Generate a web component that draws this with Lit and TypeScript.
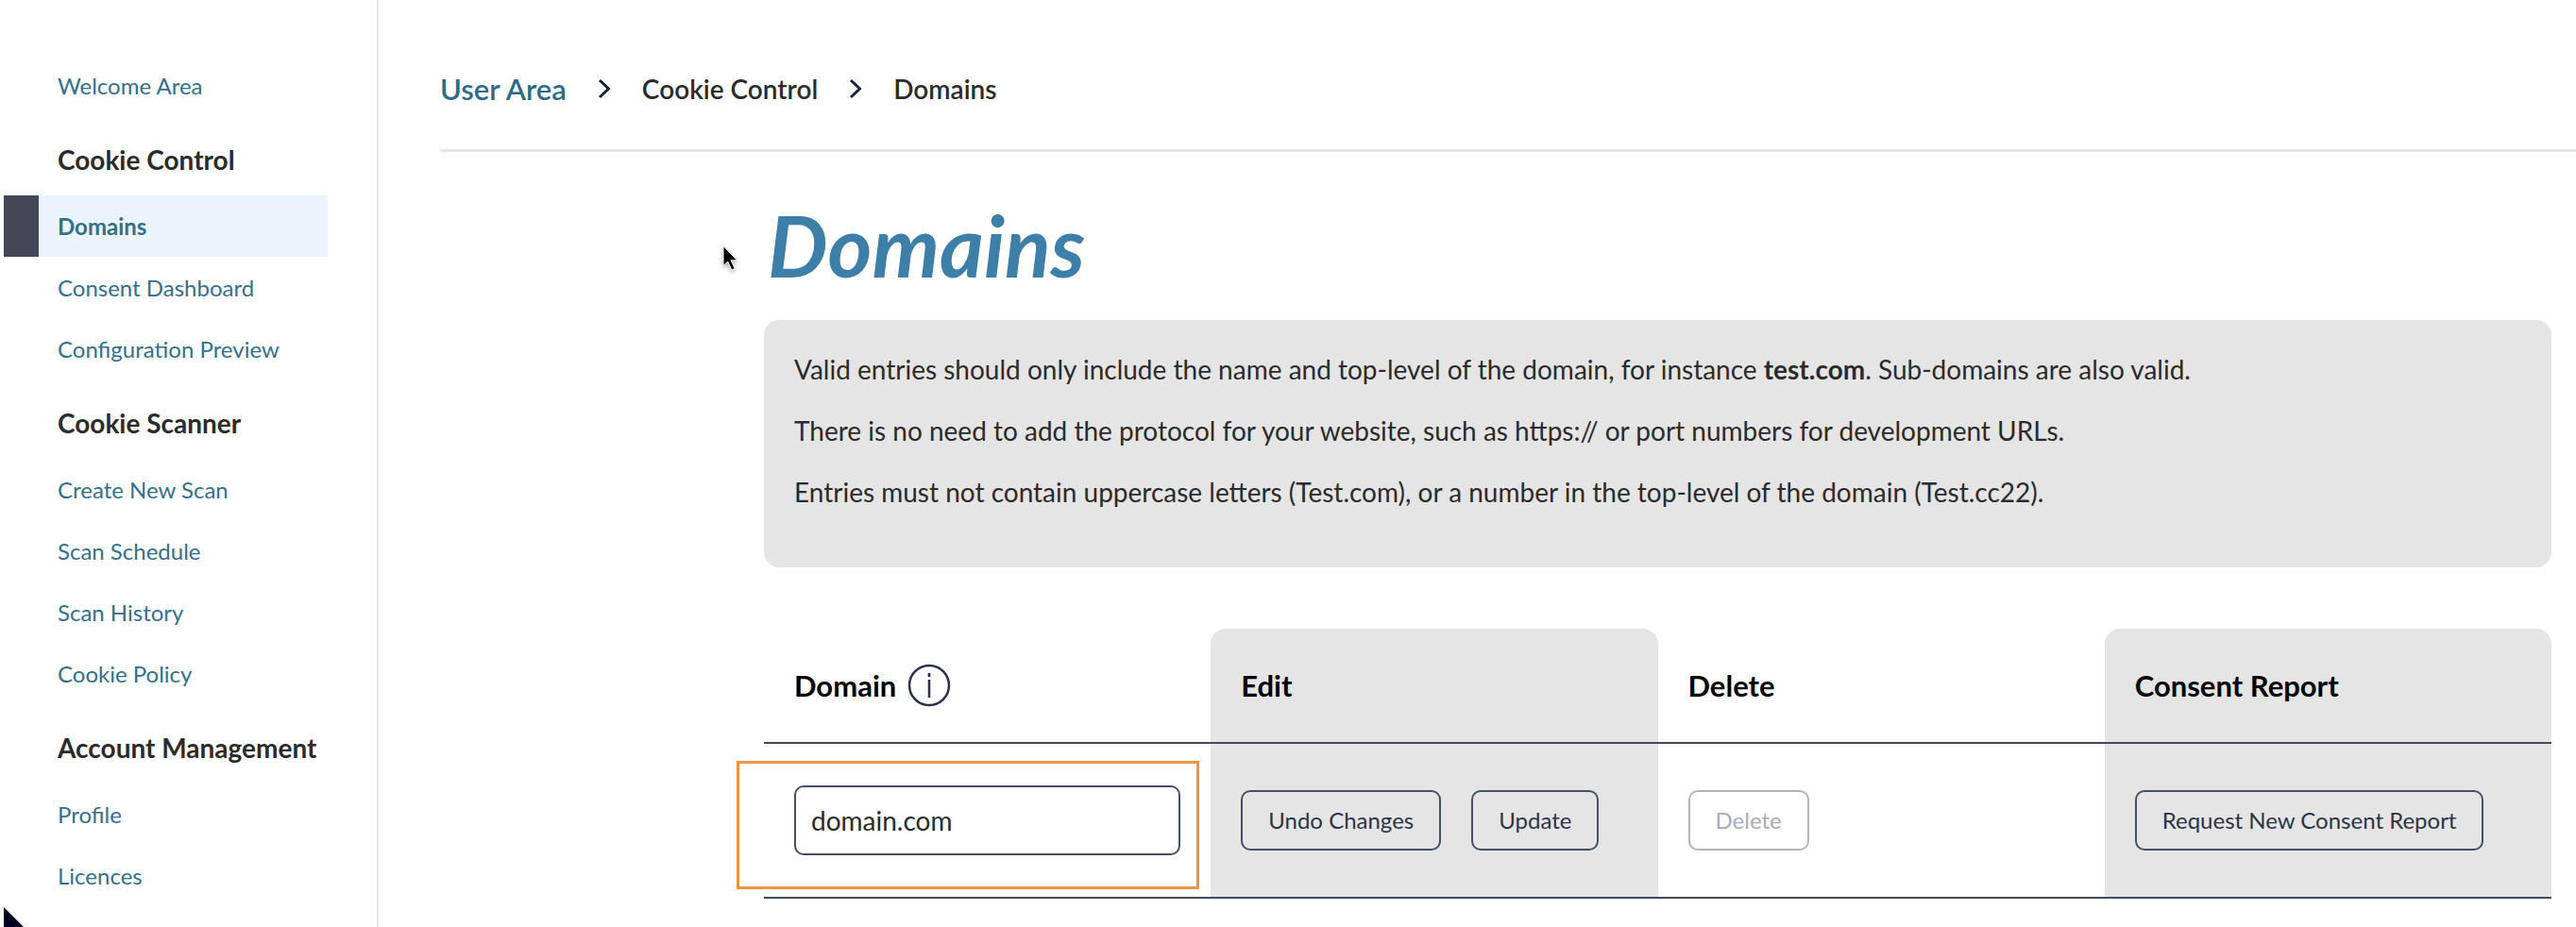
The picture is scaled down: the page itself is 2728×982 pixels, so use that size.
import { LitElement, html, css } from "lit";
import { customElement, state } from "lit/decorators.js";
import { classMap } from "lit/directives/class-map.js";

interface NavGroup {
  title?: string;
  items: string[];
}

const NAV: NavGroup[] = [
  { items: ["Welcome Area"] },
  { title: "Cookie Control", items: ["Domains", "Consent Dashboard", "Configuration Preview"] },
  { title: "Cookie Scanner", items: ["Create New Scan", "Scan Schedule", "Scan History", "Cookie Policy"] },
  { title: "Account Management", items: ["Profile", "Licences"] },
];

@customElement("side-nav")
export class SideNav extends LitElement {
  static styles = css`
    :host {
      display: block;
      box-sizing: border-box;
      border-right: 2px solid #e9e9e9;
      padding: 58px 52px 0 4px;
    }
    ul {
      list-style: none;
      margin: 0;
      padding: 0;
    }
    h2 {
      margin: 0;
      padding: 30px 0 22px 57px;
      font-size: 28px;
      font-weight: 700;
      line-height: 32px;
      color: #2b2b2b;
      white-space: nowrap;
    }
    .link {
      display: block;
      padding-left: 57px;
      font-size: 24px;
      line-height: 65px;
      color: #34708b;
      text-decoration: none;
    }
    .active {
      border-left: 37px solid #434757;
      padding-left: 20px;
      background: #ebf3fc;
      font-weight: 700;
    }
  `;

  render() {
    return html`<nav aria-label="Main">
      ${NAV.map(
        (group) => html`
          ${group.title ? html`<h2>${group.title}</h2>` : null}
          <ul>
            ${group.items.map(
              (item) => html`<li>
                <a class=${classMap({ link: true, active: item === "Domains" })} href="#">${item}</a>
              </li>`
            )}
          </ul>
        `
      )}
    </nav>`;
  }
}

@customElement("bread-crumbs")
export class BreadCrumbs extends LitElement {
  static styles = css`
    :host {
      display: block;
      border-bottom: 3px solid #e6e6e6;
      padding: 74px 0 44px;
    }
    ol {
      display: flex;
      align-items: center;
      gap: 33px;
      list-style: none;
      margin: 0;
      padding: 0;
    }
    li {
      display: flex;
      align-items: center;
      gap: 33px;
      font-size: 28px;
      font-weight: 600;
      line-height: 40px;
      color: #2b2b2b;
    }
    a {
      font-size: 31px;
      color: #2f6b87;
      text-decoration: none;
    }
    svg {
      width: 14px;
      height: 22px;
      fill: none;
      stroke: #1b2138;
      stroke-width: 3;
    }
  `;

  private chevron = html`<svg viewBox="0 0 14 22" aria-hidden="true"><path d="M2 2 L11.5 11 L2 20" /></svg>`;

  render() {
    return html`<nav aria-label="Breadcrumb">
      <ol>
        <li><a href="#">User Area</a>${this.chevron}</li>
        <li>Cookie Control${this.chevron}</li>
        <li aria-current="page">Domains</li>
      </ol>
    </nav>`;
  }
}

@customElement("domain-table")
export class DomainTable extends LitElement {
  @state() private domain = "domain.com";

  static styles = css`
    :host {
      display: block;
    }
    table {
      width: 100%;
      table-layout: fixed;
      border-collapse: separate;
      border-spacing: 0;
    }
    th,
    td {
      box-sizing: border-box;
      padding: 0 32px;
      text-align: left;
      vertical-align: middle;
      border-bottom: 2px solid #414b5e;
    }
    th {
      height: 122px;
      font-size: 31px;
      font-weight: 700;
      line-height: 40px;
      color: #000;
    }
    td {
      position: relative;
      height: 164px;
    }
    th:nth-child(even),
    td:nth-child(even) {
      background: #e5e5e5;
    }
    th:nth-child(even) {
      border-radius: 16px 16px 0 0;
    }
    .head {
      display: flex;
      align-items: center;
      gap: 12px;
    }
    .info {
      width: 46px;
      height: 46px;
      fill: none;
      stroke: #2a3148;
      stroke-width: 2.5;
    }
    .actions {
      display: flex;
      gap: 32px;
    }
    button {
      box-sizing: border-box;
      height: 64px;
      padding: 0 27px;
      border: 2px solid #465064;
      border-radius: 10px;
      background: none;
      font: 24px/32px Lato, sans-serif;
      color: #2c3448;
      white-space: nowrap;
    }
    button:disabled {
      border-color: #b1b5bc;
      color: #a9adb5;
    }
    input {
      box-sizing: border-box;
      display: block;
      width: 100%;
      height: 74px;
      padding: 0 16px;
      border: 2px solid #465064;
      border-radius: 10px;
      background: #fff;
      font: 28px/40px Lato, sans-serif;
      color: #2b2b2b;
      outline: none;
    }
    .highlight {
      position: absolute;
      inset: 18px 12px 8px -29px;
      border: 3px solid #f09443;
      pointer-events: none;
    }
  `;

  private onInput(e: InputEvent) {
    this.domain = (e.target as HTMLInputElement).value;
  }

  render() {
    return html`<table>
      <thead>
        <tr>
          <th scope="col">
            <span class="head">
              <label for="domain">Domain</label>
              <svg class="info" viewBox="0 0 46 46" role="img" aria-label="Information">
                <circle cx="23" cy="23" r="21" />
                <path d="M23 10v4M23 17v19" />
              </svg>
            </span>
          </th>
          <th scope="col">Edit</th>
          <th scope="col">Delete</th>
          <th scope="col">Consent Report</th>
        </tr>
      </thead>
      <tbody>
        <tr>
          <td>
            <input id="domain" type="text" .value=${this.domain} @input=${this.onInput} />
            <div class="highlight"></div>
          </td>
          <td>
            <div class="actions">
              <button type="button">Undo Changes</button>
              <button type="button">Update</button>
            </div>
          </td>
          <td><button type="button" disabled>Delete</button></td>
          <td><button type="button">Request New Consent Report</button></td>
        </tr>
      </tbody>
    </table>`;
  }
}

@customElement("app-root")
export class AppRoot extends LitElement {
  static styles = css`
    :host {
      display: grid;
      grid-template-columns: 401px minmax(0, 1fr);
      position: relative;
      min-height: 100vh;
      background: #fff;
      font-family: Lato, sans-serif;
      color: #2b2b2b;
      overflow: hidden;
    }
    main {
      padding-left: 65px;
    }
    .content {
      padding: 46px 26px 0 343px;
    }
    h1 {
      margin: 0 0 28px;
      padding-left: 4px;
      font-size: 90px;
      font-style: italic;
      font-weight: 700;
      line-height: 104px;
      color: #3d7fa9;
    }
    .notice {
      margin-bottom: 65px;
      padding: 32px 32px 35px;
      border-radius: 16px;
      background: #e5e5e5;
    }
    .notice p {
      margin: 0 0 24px;
      font-size: 28px;
      line-height: 41px;
    }
    .pointer {
      position: absolute;
      left: 764px;
      top: 258px;
      width: 20px;
      height: 32px;
      overflow: visible;
      filter: drop-shadow(0 2px 2px rgba(0, 0, 0, 0.35));
    }
    .corner {
      position: absolute;
      left: 4px;
      bottom: 0;
      width: 21px;
      height: 21px;
      fill: #00001f;
    }
  `;

  render() {
    return html`
      <side-nav></side-nav>
      <main>
        <bread-crumbs></bread-crumbs>
        <div class="content">
          <h1>Domains</h1>
          <section class="notice">
            <p>
              Valid entries should only include the name and top-level of the domain, for instance
              <strong>test.com</strong>. Sub-domains are also valid.
            </p>
            <p>There is no need to add the protocol for your website, such as https:// or port numbers for development URLs.</p>
            <p>Entries must not contain uppercase letters (Test.com), or a number in the top-level of the domain (Test.cc22).</p>
          </section>
          <domain-table></domain-table>
        </div>
      </main>
      <svg class="pointer" viewBox="0 0 20 32" aria-hidden="true">
        <path d="M2 2.5V23.500l4.700-4.300 4.200 8.800 3.300-1.500-4.100-8.700h6.400z" fill="#000" stroke="#fff" stroke-width="1" />
      </svg>
      <svg class="corner" viewBox="0 0 21 21" aria-hidden="true"><path d="M0 0L21 21H0z" /></svg>
    `;
  }
}
